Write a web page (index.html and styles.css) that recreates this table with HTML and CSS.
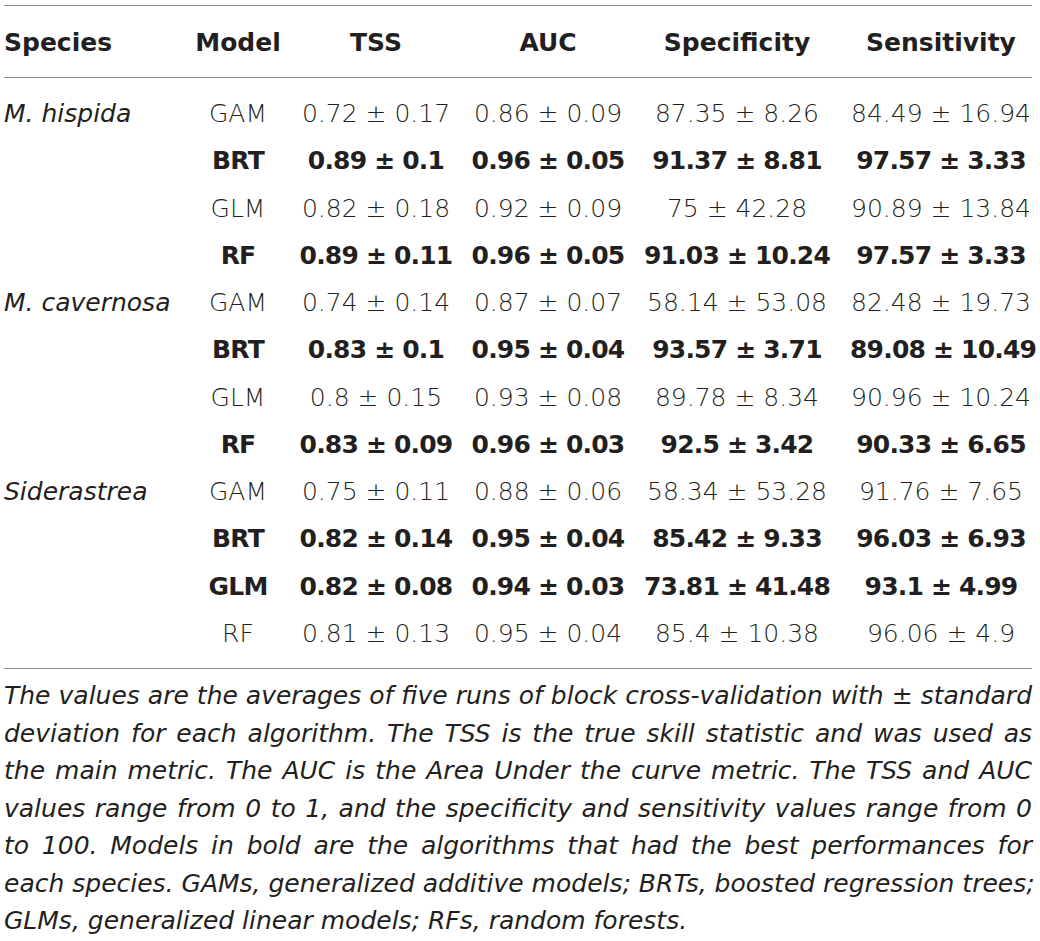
FILE: index.html
```html
<!DOCTYPE html>
<html lang="en">
<head>
    <meta charset="UTF-8">
    <title>Model performance</title>
    <link rel="stylesheet" href="styles.css">
</head>
<body>
    <div class="table-wrap">
        <table class="results">
            <colgroup>
                <col class="col-species">
                <col class="col-model">
                <col class="col-tss">
                <col class="col-auc">
                <col class="col-spec">
                <col class="col-sens">
            </colgroup>
            <thead>
                <tr>
                    <th class="species">Species</th>
                    <th>Model</th>
                    <th>TSS</th>
                    <th>AUC</th>
                    <th>Specificity</th>
                    <th class="sens">Sensitivity</th>
                </tr>
            </thead>
            <tbody>
                <!-- M. hispida -->
                <tr>
                    <td class="species">M. hispida</td>
                    <td>GAM</td>
                    <td>0.72 ± 0.17</td>
                    <td>0.86 ± 0.09</td>
                    <td>87.35 ± 8.26</td>
                    <td class="sens">84.49 ± 16.94</td>
                </tr>
                <tr class="best">
                    <td class="species"></td>
                    <td>BRT</td>
                    <td>0.89 ± 0.1</td>
                    <td>0.96 ± 0.05</td>
                    <td>91.37 ± 8.81</td>
                    <td class="sens">97.57 ± 3.33</td>
                </tr>
                <tr>
                    <td class="species"></td>
                    <td>GLM</td>
                    <td>0.82 ± 0.18</td>
                    <td>0.92 ± 0.09</td>
                    <td>75 ± 42.28</td>
                    <td class="sens">90.89 ± 13.84</td>
                </tr>
                <tr class="best">
                    <td class="species"></td>
                    <td>RF</td>
                    <td>0.89 ± 0.11</td>
                    <td>0.96 ± 0.05</td>
                    <td>91.03 ± 10.24</td>
                    <td class="sens">97.57 ± 3.33</td>
                </tr>
                <!-- M. cavernosa -->
                <tr>
                    <td class="species">M. cavernosa</td>
                    <td>GAM</td>
                    <td>0.74 ± 0.14</td>
                    <td>0.87 ± 0.07</td>
                    <td>58.14 ± 53.08</td>
                    <td class="sens">82.48 ± 19.73</td>
                </tr>
                <tr class="best">
                    <td class="species"></td>
                    <td>BRT</td>
                    <td>0.83 ± 0.1</td>
                    <td>0.95 ± 0.04</td>
                    <td>93.57 ± 3.71</td>
                    <td class="sens">89.08 ± 10.49</td>
                </tr>
                <tr>
                    <td class="species"></td>
                    <td>GLM</td>
                    <td>0.8 ± 0.15</td>
                    <td>0.93 ± 0.08</td>
                    <td>89.78 ± 8.34</td>
                    <td class="sens">90.96 ± 10.24</td>
                </tr>
                <tr class="best">
                    <td class="species"></td>
                    <td>RF</td>
                    <td>0.83 ± 0.09</td>
                    <td>0.96 ± 0.03</td>
                    <td>92.5 ± 3.42</td>
                    <td class="sens">90.33 ± 6.65</td>
                </tr>
                <!-- Siderastrea -->
                <tr>
                    <td class="species">Siderastrea</td>
                    <td>GAM</td>
                    <td>0.75 ± 0.11</td>
                    <td>0.88 ± 0.06</td>
                    <td>58.34 ± 53.28</td>
                    <td class="sens">91.76 ± 7.65</td>
                </tr>
                <tr class="best">
                    <td class="species"></td>
                    <td>BRT</td>
                    <td>0.82 ± 0.14</td>
                    <td>0.95 ± 0.04</td>
                    <td>85.42 ± 9.33</td>
                    <td class="sens">96.03 ± 6.93</td>
                </tr>
                <tr class="best">
                    <td class="species"></td>
                    <td>GLM</td>
                    <td>0.82 ± 0.08</td>
                    <td>0.94 ± 0.03</td>
                    <td>73.81 ± 41.48</td>
                    <td class="sens">93.1 ± 4.99</td>
                </tr>
                <tr>
                    <td class="species"></td>
                    <td>RF</td>
                    <td>0.81 ± 0.13</td>
                    <td>0.95 ± 0.04</td>
                    <td>85.4 ± 10.38</td>
                    <td class="sens">96.06 ± 4.9</td>
                </tr>
            </tbody>
        </table>

        <!-- nota al pie, con los mismos cortes de linea que el original -->
        <p class="table-note">
            <span class="line">The values are the averages of five runs of block cross-validation with ± standard</span>
            <span class="line">deviation for each algorithm. The TSS is the true skill statistic and was used as</span>
            <span class="line">the main metric. The AUC is the Area Under the curve metric. The TSS and AUC</span>
            <span class="line">values range from 0 to 1, and the specificity and sensitivity values range from 0</span>
            <span class="line">to 100. Models in bold are the algorithms that had the best performances for</span>
            <span class="line">each species. GAMs, generalized additive models; BRTs, boosted regression trees;</span>
            <span class="line last">GLMs, generalized linear models; RFs, random forests.</span>
        </p>
    </div>
</body>
</html>
```

FILE: styles.css
```css
:root {
    --text-color: #231f20;
    --rule-color: #8e8e8e;
}

* {
    margin: 0;
    padding: 0;
    box-sizing: border-box;
}

body {
    background-color: #ffffff;
    color: var(--text-color);
    font-family: "DejaVu Sans", sans-serif;
}

.table-wrap {
    width: 1028px;
    margin: 5px 0 0 4px;
}

.results {
    width: 100%;
    border-collapse: collapse;
    table-layout: fixed;
    font-size: 25px;
    border-top: 1px solid var(--rule-color);
    border-bottom: 1px solid var(--rule-color);
}

.col-species { width: 186px; }
.col-model { width: 96px; }
.col-tss { width: 180px; }
.col-auc { width: 164px; }
.col-spec { width: 214px; }
.col-sens { width: 188px; }

th {
    height: 72px;
    padding-top: 2px;
    font-weight: bold;
    text-align: center;
    border-bottom: 1px solid var(--rule-color);
}

td {
    text-align: center;
    line-height: 47.25px;
    font-weight: 300;
    white-space: nowrap;
}

/* espacio arriba y abajo del cuerpo de la tabla */
tbody tr:first-child td {
    padding-top: 12px;
}

tbody tr:last-child td {
    padding-bottom: 11px;
}

.species {
    text-align: left;
}

td.species {
    font-style: italic;
}

.sens {
    padding-left: 6px;
}

.best td {
    font-weight: bold;
    letter-spacing: -0.8px;
}

.table-note {
    margin-top: 8px;
    font-size: 25px;
    font-style: italic;
    font-weight: 300;
    line-height: 37.5px;
}

.table-note .line {
    display: block;
    white-space: nowrap;
    text-align: justify;
    text-align-last: justify;
}

.table-note .line.last {
    text-align-last: left;
}
```
